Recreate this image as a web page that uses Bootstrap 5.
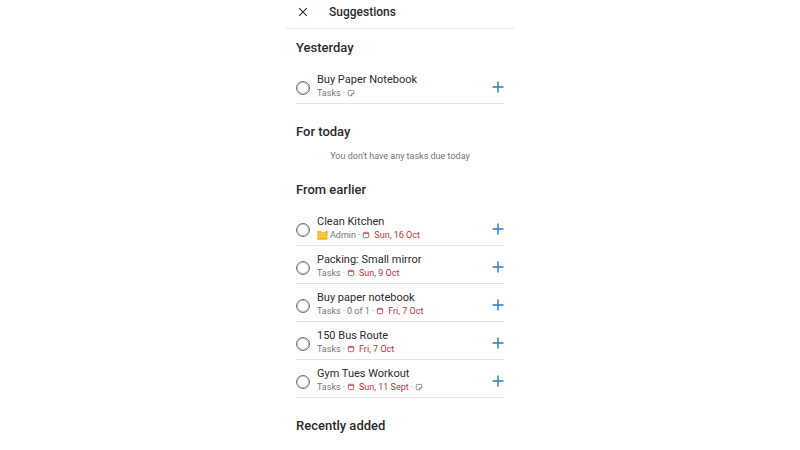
<!DOCTYPE html>
<html lang="en">
<head>
<meta charset="utf-8">
<meta name="viewport" content="width=device-width, initial-scale=1">
<title>Suggestions</title>
<link href="https://cdn.jsdelivr.net/npm/bootstrap@5.3.0/dist/css/bootstrap.min.css" rel="stylesheet">
<style>
  body { font-family: Roboto, "Liberation Sans", sans-serif; color: #2b2b2b; background: #fff; }
  .panel { max-width: 228px; }
  .panel-head { height: 29px; padding: 0 10px 4px; gap: 19px; border-bottom: 1px solid #e6e6e6; }
  .panel-head h1 { font-size: 12px; line-height: 16px; font-weight: 500; }
  .panel-body { padding: 9px 10px; gap: 18px; }
  .section-title { font-size: 13px; line-height: 20px; font-weight: 500; margin-bottom: 8px; }
  .empty-note { font-size: 9px; line-height: 12px; color: #757575; }
  .task { padding-top: 7px; gap: 7px; border-bottom: 1px solid #e2e2e2; }
  .task-check.form-check-input { width: 14px; height: 14px; border: 1px solid #717175; border-radius: 50%; box-shadow: inset 0 0 0 1px #c4c4c6; }
  .task-text { padding-bottom: 4px; }
  .task-name { font-size: 11px; line-height: 14px; }
  .task-meta { font-size: 9px; line-height: 12px; gap: 2px; color: #757575; }
  .due { color: #b9343a; gap: 4px; }
  .icon-btn { border: 0; background: none; padding: 0; color: #333; line-height: 0; }
  .add-btn { color: #2f78c4; padding-bottom: 2px; }
</style>
</head>
<body>
<svg class="d-none" aria-hidden="true">
  <symbol id="i-plus" viewBox="0 0 12 12"><path d="M6 .5v11M.5 6h11" fill="none" stroke="currentColor" stroke-width="1.4"/></symbol>
  <symbol id="i-cal" viewBox="0 0 8 8"><rect x="1.3" y="1.3" width="5.4" height="5.4" rx="1" fill="none" stroke="currentColor" stroke-width=".8"/><path d="M1.3 2.4h5.4" stroke="currentColor" stroke-width=".8"/></symbol>
  <symbol id="i-note" viewBox="0 0 8 8"><path d="M2.2 1.4h3.6q1 0 1 1v2.1L4.5 6.8H2.2q-1 0-1-1V2.4q0-1 1-1zM6.8 4.5H5.3q-.8 0-.8.8v1.5" fill="none" stroke="currentColor" stroke-width=".8"/></symbol>
  <symbol id="i-folder" viewBox="0 0 11 10"><path d="M.6 1.3h3.4l.8.8h3.4l.6-1.1h1.6v4H.6z" fill="#d99a16"/><path d="M1.6 2.2h7.4v2H1.6z" fill="#e8c56a"/><path d="M.1 3.3h10.7l-.5 6.2H.5z" fill="#fdc82f"/><path d="M.4 8h10l-.1 1.5H.5z" fill="#f0ae1c"/></symbol>
</svg>
<main class="panel mx-auto w-100">
  <header class="panel-head d-flex align-items-center">
    <button class="icon-btn" type="button" aria-label="Close"><svg width="14" height="14" viewBox="0 0 14 14"><path d="M3.2 3.2l7.6 7.6M10.8 3.2l-7.6 7.6" stroke="currentColor" stroke-width="1.2"/></svg></button>
    <h1 class="m-0">Suggestions</h1>
  </header>
  <div class="panel-body d-flex flex-column">
    <section>
      <h2 class="section-title">Yesterday</h2>
      <div class="task d-flex align-items-center">
        <input class="form-check-input task-check m-0 flex-shrink-0" type="checkbox" id="t1">
        <div class="task-text flex-grow-1">
          <label class="task-name d-block" for="t1">Buy Paper Notebook</label>
          <div class="task-meta d-flex align-items-center"><span>Tasks</span><span>·</span><svg width="8" height="8"><use href="#i-note"/></svg></div>
        </div>
        <button class="icon-btn add-btn" type="button" aria-label="Add Buy Paper Notebook"><svg width="12" height="12"><use href="#i-plus"/></svg></button>
      </div>
    </section>
    <section>
      <h2 class="section-title">For today</h2>
      <p class="empty-note text-center m-0">You don't have any tasks due today</p>
    </section>
    <section>
      <h2 class="section-title">From earlier</h2>
      <div class="task d-flex align-items-center">
        <input class="form-check-input task-check m-0 flex-shrink-0" type="checkbox" id="t2">
        <div class="task-text flex-grow-1">
          <label class="task-name d-block" for="t2">Clean Kitchen</label>
          <div class="task-meta d-flex align-items-center"><svg width="11" height="10"><use href="#i-folder"/></svg><span>Admin</span><span>·</span><span class="due d-flex align-items-center"><svg width="8" height="8"><use href="#i-cal"/></svg>Sun, 16 Oct</span></div>
        </div>
        <button class="icon-btn add-btn" type="button" aria-label="Add Clean Kitchen"><svg width="12" height="12"><use href="#i-plus"/></svg></button>
      </div>
      <div class="task d-flex align-items-center">
        <input class="form-check-input task-check m-0 flex-shrink-0" type="checkbox" id="t3">
        <div class="task-text flex-grow-1">
          <label class="task-name d-block" for="t3">Packing: Small mirror</label>
          <div class="task-meta d-flex align-items-center"><span>Tasks</span><span>·</span><span class="due d-flex align-items-center"><svg width="8" height="8"><use href="#i-cal"/></svg>Sun, 9 Oct</span></div>
        </div>
        <button class="icon-btn add-btn" type="button" aria-label="Add Packing: Small mirror"><svg width="12" height="12"><use href="#i-plus"/></svg></button>
      </div>
      <div class="task d-flex align-items-center">
        <input class="form-check-input task-check m-0 flex-shrink-0" type="checkbox" id="t4">
        <div class="task-text flex-grow-1">
          <label class="task-name d-block" for="t4">Buy paper notebook</label>
          <div class="task-meta d-flex align-items-center"><span>Tasks</span><span>·</span><span>0 of 1</span><span>·</span><span class="due d-flex align-items-center"><svg width="8" height="8"><use href="#i-cal"/></svg>Fri, 7 Oct</span></div>
        </div>
        <button class="icon-btn add-btn" type="button" aria-label="Add Buy paper notebook"><svg width="12" height="12"><use href="#i-plus"/></svg></button>
      </div>
      <div class="task d-flex align-items-center">
        <input class="form-check-input task-check m-0 flex-shrink-0" type="checkbox" id="t5">
        <div class="task-text flex-grow-1">
          <label class="task-name d-block" for="t5">150 Bus Route</label>
          <div class="task-meta d-flex align-items-center"><span>Tasks</span><span>·</span><span class="due d-flex align-items-center"><svg width="8" height="8"><use href="#i-cal"/></svg>Fri, 7 Oct</span></div>
        </div>
        <button class="icon-btn add-btn" type="button" aria-label="Add 150 Bus Route"><svg width="12" height="12"><use href="#i-plus"/></svg></button>
      </div>
      <div class="task d-flex align-items-center">
        <input class="form-check-input task-check m-0 flex-shrink-0" type="checkbox" id="t6">
        <div class="task-text flex-grow-1">
          <label class="task-name d-block" for="t6">Gym Tues Workout</label>
          <div class="task-meta d-flex align-items-center"><span>Tasks</span><span>·</span><span class="due d-flex align-items-center"><svg width="8" height="8"><use href="#i-cal"/></svg>Sun, 11 Sept</span><span>·</span><svg width="8" height="8"><use href="#i-note"/></svg></div>
        </div>
        <button class="icon-btn add-btn" type="button" aria-label="Add Gym Tues Workout"><svg width="12" height="12"><use href="#i-plus"/></svg></button>
      </div>
    </section>
    <section>
      <h2 class="section-title mb-0">Recently added</h2>
    </section>
  </div>
</main>
</body>
</html>
